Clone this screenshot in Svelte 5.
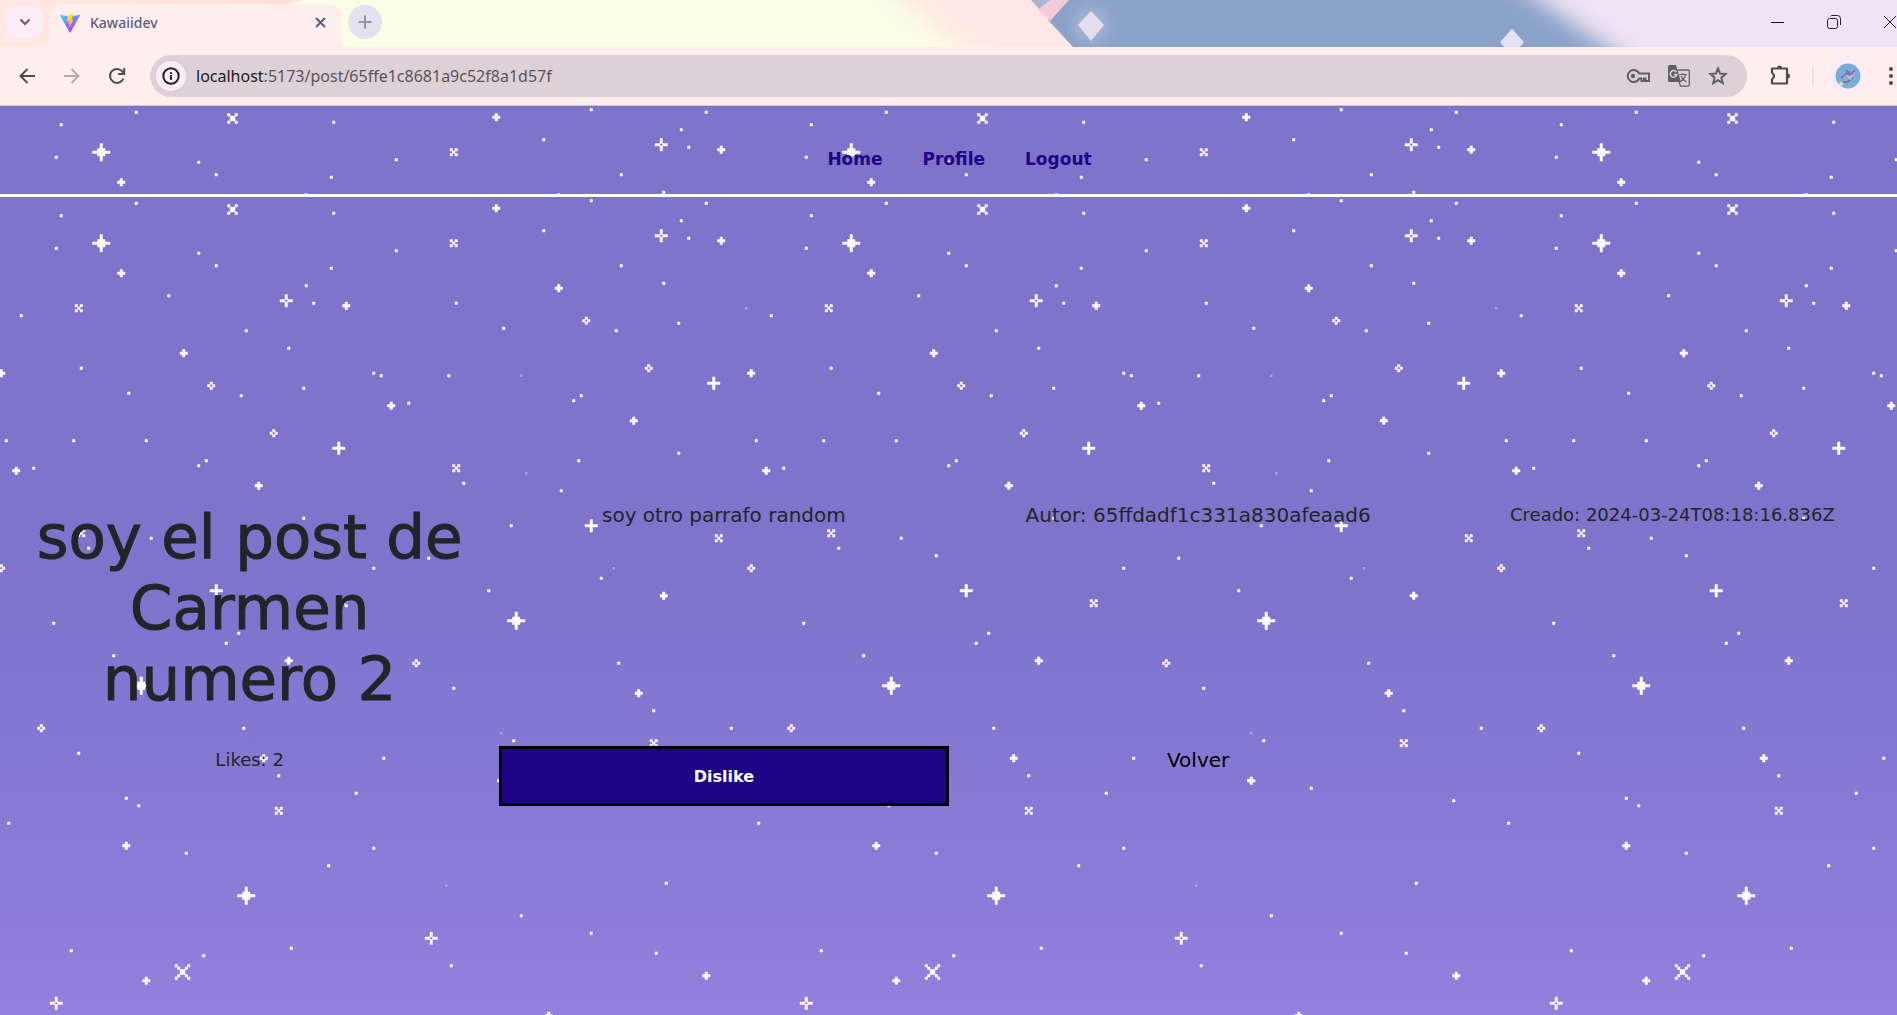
<script>
  // Each entry: kind, then column/row pairs on the 300-column pixel grid of the sky tile.
  const sky = {
    dot: [54,2, 24,7, 133,6, 236,1, 282,2, 272,9, 275,16, 217,13, 158,21, 22,20, 79,22, 86,27, 132,28, 248,27, 265,34,
      122,35, 125,42, 67,39, 8,47, 182,42, 201,52, 246,53, 271,50, 98,53, 115,60, 32,68, 51,78, 96,79, 121,76, 149,70,
      152,71, 179,71, 163,82, 232,79, 229,81, 2,97, 29,97, 58,97, 13,108, 82,105, 79,107, 185,114, 231,105, 271,102,
      224,117, 121,128, 35,140, 60,136, 74,143, 149,148, 171,144, 204,131, 240,152, 195,157, 21,170, 95,174, 90,178,
      45,183, 181,196, 247,186, 261,205, 292,212, 97,212, 31,222, 153,224, 111,231, 142,238, 205,217, 50,240, 55,243,
      3,250, 199,233, 224,236, 281,241, 74,262, 149,260, 131,267, 266,274, 208,287, 236,294, 28,301, 81,303, 116,300,
      180,307, 262,302],
    faint: [298,44, 208,71, 210,110, 245,148, 200,214, 178,275],
    plus: [198,4, 288,17, 48,30, 223,36, 138,43, 73,62, 0,70, 300,70, 156,83, 253,89, 6,109, 103,115, 265,159, 115,185,
      255,198, 105,224, 200,233, 50,259, 58,313, 282,311, 219,327],
    cross: [181,18, 31,44, 182,108, 32,134, 287,136, 137,162, 261,218, 111,245],
    ring: [234,49, 84,75, 259,68, 109,94, 0,148, 300,148, 166,186, 16,212],
    open: [264,15, 114,41, 172,296, 22,322],
    tall: [285,74, 135,100, 236,131, 86,157],
    star: [40,18, 206,169, 56,195, 98,279],
    burst: [93,5],
    big: [73,310]
  };
  const shapes = {
    dot: 'M0 0h1v1h-1z',
    faint: 'M0 0h1v1h-1z',
    plus: 'M0-1h1v1h1v1h-1v1h-1v-1h-1v-1h1z',
    cross: 'M-1-1h1v1h-1zM1-1h1v1h-1zM0 0h1v1h-1zM-1 1h1v1h-1zM1 1h1v1h-1z',
    ring: 'M0-1h1v1h-1zM-1 0h1v1h-1zM1 0h1v1h-1zM0 1h1v1h-1z',
    open: 'M0-2h1v2h-1zM-2 0h2v1h-2zM1 0h2v1h-2zM0 1h1v2h-1z',
    tall: 'M0-2h1v2h2v1h-2v2h-1v-2h-2v-1h2z',
    star: 'M0-3h1v2h1v1h2v1h-2v1h-1v2h-1v-2h-1v-1h-2v-1h2v-1h1z',
    burst: 'M-2-2h1v1h-1zM1-2h1v1h-1zM-1-1h2v2h-2zM-2 1h1v1h-1zM1 1h1v1h-1z',
    big: 'M-3-3h1v1h-1zM-2-2h1v1h-1zM-1-1h2v2h-2zM1-2h1v1h-1zM2-3h1v1h-1zM-2 1h1v1h-1zM-3 2h1v1h-1zM1 1h1v1h-1zM2 2h1v1h-1z'
  };
  const stars = Object.entries(sky).flatMap(([kind, at]) => {
    const out = [];
    for (let i = 0; i < at.length; i += 2) out.push({ kind, x: at[i], y: at[i + 1] });
    return out;
  });
</script>

{#snippet night(id)}
  <svg class="night" aria-hidden="true">
    <defs>
      <pattern {id} width="300" height="400" patternUnits="userSpaceOnUse" patternTransform="scale(2.5)">
        {#each stars as s}
          <path class={s.kind} d={shapes[s.kind]} transform="translate({s.x} {s.y})" />
        {/each}
      </pattern>
    </defs>
    <rect width="100%" height="100%" fill="url(#{id})" />
  </svg>
{/snippet}

<div class="window">
  <header class="strip">
    <svg class="art" viewBox="0 0 1897 47" preserveAspectRatio="none" aria-hidden="true">
      <defs>
        <linearGradient id="warm" x1="0" x2="1" y1="0" y2="0">
          <stop offset="0" stop-color="#ffe8e2" /><stop offset="1" stop-color="#ffdedd" />
        </linearGradient>
        <filter id="soft" x="-20%" y="-80%" width="140%" height="260%"><feGaussianBlur stdDeviation="11" /></filter>
        <filter id="glow" x="-100%" y="-100%" width="300%" height="300%"><feGaussianBlur stdDeviation="7" /></filter>
      </defs>
      <rect width="1897" height="47" fill="#fbffe6" />
      <path d="M0 0H305Q260 6 240 47H0z" fill="url(#warm)" />
      <path d="M860-30H1120V80H1000z" fill="#ffe8e4" filter="url(#soft)" />
      <path d="M1062 0H1640V47H1073L1048 20z" fill="#8aa2c8" />
      <path d="M1031 0H1052L1040 10z" fill="#a9b4d2" />
      <path d="M1050 0H1069L1050 21L1038 10z" fill="#f3cbdb" />
      <path d="M1040 24L1064 60H1040z" fill="#ffe8e3" filter="url(#glow)" />
      <path d="M1480-40L1640 70H1950V-40z" fill="#efe3f5" filter="url(#soft)" />
      <circle cx="1091" cy="25" r="17" fill="#b9c4e0" opacity=".6" filter="url(#glow)" />
      <path d="M1091 11l13 14-13 16-13-16z" fill="#e5dcec" />
      <path d="M1512 29l12 13-12 15-12-15z" fill="#e2e2fb" />
    </svg>
    <button class="search" aria-label="Search tabs">
      <svg width="12" height="8" viewBox="0 0 12 8"><path d="M1.500 1.500L6 6l4.500-4.500" fill="none" stroke="#5a6078" stroke-width="2" /></svg>
    </button>
    <div class="tab">
      <svg class="flare left" width="10" height="10" viewBox="0 0 10 10"><path d="M10 0v10H0Q10 10 10 0" fill="#ffeeee" /></svg>
      <svg width="20" height="20" viewBox="0 0 20 20" aria-hidden="true">
        <defs>
          <linearGradient id="va" x1="0" y1="0" x2=".6" y2="1"><stop stop-color="#41d1ff" /><stop offset="1" stop-color="#bd34fe" /></linearGradient>
          <linearGradient id="vb" x1=".4" y1="0" x2=".6" y2="1"><stop stop-color="#ffea83" /><stop offset=".2" stop-color="#ffdd35" /><stop offset="1" stop-color="#ffa800" /></linearGradient>
        </defs>
        <path d="M19.800 2.700L10.500 19.500a.5.5 0 0 1-.9 0L.2 2.700a.5.5 0 0 1 .6-.8L10 3.600l9.200-1.700a.5.5 0 0 1 .6.8z" fill="url(#va)" />
        <path d="M14.400 0L7.600 1.400l-.5 7.200 2-.4-.6 2.800 1.300-.4-1 4.900 4.700-9-2.400.4z" fill="url(#vb)" />
      </svg>
      <span class="title">Kawaiidev</span>
      <button class="close" aria-label="Close tab">
        <svg width="11" height="11" viewBox="0 0 11 11"><path d="M1 1l9 9M10 1l-9 9" stroke="#5a6078" stroke-width="2" /></svg>
      </button>
      <svg class="flare right" width="10" height="10" viewBox="0 0 10 10"><path d="M0 0v10h10Q0 10 0 0" fill="#ffeeee" /></svg>
    </div>
    <button class="new" aria-label="New tab">
      <svg width="14" height="14" viewBox="0 0 14 14"><path d="M7 .5v13M.5 7h13" stroke="#8d93b0" stroke-width="2" /></svg>
    </button>
    <div class="controls">
      <button aria-label="Minimize"><svg width="14" height="14" viewBox="0 0 14 14"><path d="M0 7.500h13" stroke="#111" /></svg></button>
      <button aria-label="Restore"><svg width="14" height="14" viewBox="0 0 14 14"><g fill="none" stroke="#222"><rect x=".5" y="3.500" width="10" height="10" rx="2" /><path d="M3.500 1.200Q4.200.5 5 .5h5.500a3 3 0 0 1 3 3V10" /></g></svg></button>
      <button aria-label="Close"><svg width="14" height="14" viewBox="0 0 14 14"><path d="M1 1l12 12M13 1L1 13" stroke="#222" /></svg></button>
    </div>
  </header>

  <div class="toolbar">
    <div class="moves">
      <button aria-label="Back"><svg width="18" height="18" viewBox="0 0 18 18"><path d="M17 9H3M9.500 2L2.500 9l7 7" fill="none" stroke="#4d4d50" stroke-width="2" /></svg></button>
      <button aria-label="Forward"><svg width="18" height="18" viewBox="0 0 18 18"><path d="M1 9h14M8.500 2l7 7-7 7" fill="none" stroke="#b5adb1" stroke-width="2" /></svg></button>
      <button aria-label="Reload"><svg width="18" height="18" viewBox="0 0 18 18"><path d="M15.500 11.500A7 7 0 1 1 14.200 4.200L16 6M16.200 1v6h-6" fill="none" stroke="#4d4d50" stroke-width="2" /></svg></button>
    </div>
    <div class="address">
      <button class="info" aria-label="Site information">
        <svg width="18" height="18" viewBox="0 0 18 18"><circle cx="9" cy="9" r="7.700" fill="none" stroke="#202124" stroke-width="2" /><path d="M9 8v5M9 5v2" stroke="#202124" stroke-width="1.800" /></svg>
      </button>
      <div class="url"><span class="host">localhost</span>:5173/post/65ffe1c8681a9c52f8a1d57f</div>
      <button aria-label="Passwords">
        <svg width="24" height="14" viewBox="0 0 24 14"><path d="M13.200 4.500A6 6 0 1 0 13.200 9.500H15.500V12h2.500V9.500h1.500V12H23V4.500z" fill="none" stroke="#5f6061" stroke-width="2" /><circle cx="7" cy="7" r="2.200" fill="#5f6061" /></svg>
      </button>
      <button aria-label="Translate">
        <svg width="22" height="22" viewBox="0 0 22 22">
          <path d="M9.500 5H20a1.300 1.300 0 0 1 1.300 1.300V20A1.300 1.300 0 0 1 20 21.200h-7.500L11.200 17" fill="none" stroke="#5f6061" stroke-width="1.300" />
          <path d="M1.500 0H8l5 17H1.500A1.500 1.500 0 0 1 0 15.500v-14A1.500 1.500 0 0 1 1.500 0z" fill="#5f6061" />
          <path d="M8.300 7A3.300 3.300 0 1 0 8.800 9.500H6" fill="none" stroke="#ded2d8" stroke-width="1.500" />
          <path d="M11.500 9.500H19M15 8v1.500M17.600 9.500q-1 4.500-5 7M13 11q1.500 4 5.500 6" fill="none" stroke="#5f6061" stroke-width="1.200" />
        </svg>
      </button>
      <button aria-label="Bookmark">
        <svg width="20" height="20" viewBox="0 0 20 20"><path d="M10 2.500l2.100 5.100 5.500.5-4.200 3.600 1.300 5.400L10 14.200l-4.700 2.900 1.300-5.400-4.200-3.600 5.500-.5z" fill="none" stroke="#5f6061" stroke-width="2" /></svg>
      </button>
    </div>
    <div class="extras">
      <button aria-label="Extensions">
        <svg width="22" height="22" viewBox="0 0 22 22"><path d="M3 3.500H18V18.500H3V14.500Q7 11 3 7.500z" fill="none" stroke="#4d4d50" stroke-width="2.200" stroke-linejoin="round" /><path d="M8 3a2.500 2.500 0 0 1 5 0zM18.500 8.500a2.500 2.500 0 0 1 0 5z" fill="#4d4d50" /></svg>
      </button>
      <span class="divider"></span>
      <button class="profile" aria-label="Profile">
        <svg width="26" height="26" viewBox="0 0 26 26"><circle cx="13" cy="13" r="12.500" fill="#79addb" /><path d="M5 14q6-9 15-9 3 6-2 12-6 6-11 3z" fill="#94a6d0" /><path d="M6 15l6-5 3 2 5-5M8 19q6 1 10-5M11 7l4 3" stroke="#6d6fa5" stroke-width="1.500" fill="none" /><path d="M12 14l7-3-3 6z" fill="#c2bad8" /><circle cx="6" cy="21" r="2" fill="#dbe4b6" /></svg>
      </button>
      <button aria-label="Menu"><svg width="4" height="18" viewBox="0 0 4 18"><g fill="#4d4d50"><circle cx="2" cy="2" r="2" /><circle cx="2" cy="9" r="2" /><circle cx="2" cy="16" r="2" /></g></svg></button>
    </div>
  </div>

  <div class="page">
    <nav>
      {@render night('sky-nav')}
      <a href="#home">Home</a>
      <a href="#profile">Profile</a>
      <a href="#logout">Logout</a>
    </nav>
    <main>
      {@render night('sky-main')}
      <h1>soy el post de Carmen numero 2</h1>
      <p>soy otro parrafo random</p>
      <p>Autor: 65ffdadf1c331a830afeaad6</p>
      <p class="small">Creado: 2024-03-24T08:18:16.836Z</p>
      <p class="small">Likes: 2</p>
      <button class="dislike">Dislike</button>
      <a class="back" href="#volver">Volver</a>
    </main>
  </div>
</div>

<style>
  :global(body) {
    margin: 0;
  }
  .window {
    display: flex;
    flex-direction: column;
    min-height: 100vh;
    overflow: hidden;
    font-family: "Noto Sans", "Open Sans", sans-serif;
  }
  button {
    display: flex;
    align-items: center;
    justify-content: center;
    flex: none;
    padding: 0;
    border: 0;
    background: none;
    font-family: inherit;
  }
  svg {
    display: block;
    flex: none;
  }
  .strip {
    position: relative;
    display: flex;
    height: 47px;
  }
  .art,
  .night {
    position: absolute;
    inset: 0;
    width: 100%;
    height: 100%;
  }
  .strip > button,
  .tab,
  .controls {
    position: relative;
  }
  .search {
    width: 36px;
    height: 34px;
    margin: 5px 7px 0;
    border-radius: 12px;
    background: #fbecf5;
  }
  .tab {
    display: flex;
    align-items: center;
    width: 291px;
    height: 43px;
    margin-top: 4px;
    padding: 0 15px 6px 10px;
    gap: 10px;
    box-sizing: border-box;
    border-radius: 12px 12px 0 0;
    background: #ffeeee;
  }
  .flare {
    position: absolute;
    bottom: 0;
  }
  .flare.left {
    left: -10px;
  }
  .flare.right {
    right: -10px;
  }
  .title {
    flex: 1;
    font-size: 14px;
    font-weight: 500;
    color: #5a6078;
  }
  .new {
    width: 34px;
    height: 34px;
    margin: 5px 0 0 7px;
    border-radius: 50%;
    background: #e4e0ee;
  }
  .controls {
    display: flex;
    align-items: center;
    gap: 42px;
    height: 43px;
    margin-left: auto;
  }
  .toolbar {
    display: flex;
    align-items: center;
    height: 58px;
    padding-left: 18px;
    border-bottom: 1px solid #cfc4cf;
    background: #ffeeee;
  }
  .moves {
    display: flex;
    gap: 27px;
    margin-right: 24px;
  }
  .address {
    display: flex;
    align-items: center;
    flex: 1;
    gap: 18px;
    height: 42px;
    padding: 0 19px 0 6px;
    border-radius: 21px;
    background: #ddd0d7;
  }
  .info {
    width: 30px;
    height: 30px;
    border-radius: 50%;
    background: #fbecf5;
  }
  .url {
    flex: 1;
    margin-left: -8px;
    font-size: 16px;
    color: #5c5459;
  }
  .host {
    color: #202124;
  }
  .extras {
    display: flex;
    align-items: center;
    gap: 21px;
    margin: 0 4px 0 22px;
  }
  .divider {
    width: 2px;
    height: 20px;
    background: #e2e2f2;
  }
  .profile {
    margin-right: 7px;
    border-radius: 50%;
    box-shadow: 0 0 0 7px #fbecf5;
  }
  .page {
    display: flex;
    flex-direction: column;
    flex: 1;
    font-family: "DejaVu Sans", sans-serif;
    color: #212529;
  }
  nav,
  main {
    position: relative;
    background: #7e74cc;
  }
  nav a,
  h1,
  p,
  .dislike,
  .back {
    position: relative;
  }
  .night path {
    fill: #fff8fb;
    stroke: #fff8fb;
    stroke-width: 0.2;
  }
  .night .faint {
    fill: #aaa2e6;
    stroke: none;
  }
  .night .open,
  .night .ring,
  .night .cross {
    fill: #fff0f0;
    stroke: #fff0f0;
  }
  nav {
    display: flex;
    justify-content: center;
    align-items: center;
    gap: 40px;
    height: 70px;
    padding: 18px 0 0 22px;
    border-bottom: 3px solid #ffffff;
  }
  a {
    text-decoration: none;
  }
  nav a {
    font-size: 17px;
    font-weight: 700;
    color: #1d0585;
  }
  main {
    display: grid;
    grid-template-columns: repeat(4, minmax(0, 1fr));
    grid-auto-rows: max-content;
    gap: 32px 25px;
    flex: 1;
    padding: 304px 0 0 25px;
    text-align: center;
    font-size: 20px;
    line-height: 28px;
    background: linear-gradient(#7e74cc 50%, #8377d2 62%, #8779d4 75%, #9280dc);
  }
  h1,
  p {
    margin: 0;
  }
  h1 {
    font-size: 61px;
    font-weight: 400;
    line-height: 71px;
    -webkit-text-stroke: 1px #212529;
  }
  .small {
    font-size: 18px;
  }
  .dislike {
    height: 60px;
    border: 3px solid #000000;
    background: #1d0585;
    font-size: 16px;
    font-weight: 700;
    color: #ffffff;
  }
  .back {
    color: #000000;
  }
</style>
